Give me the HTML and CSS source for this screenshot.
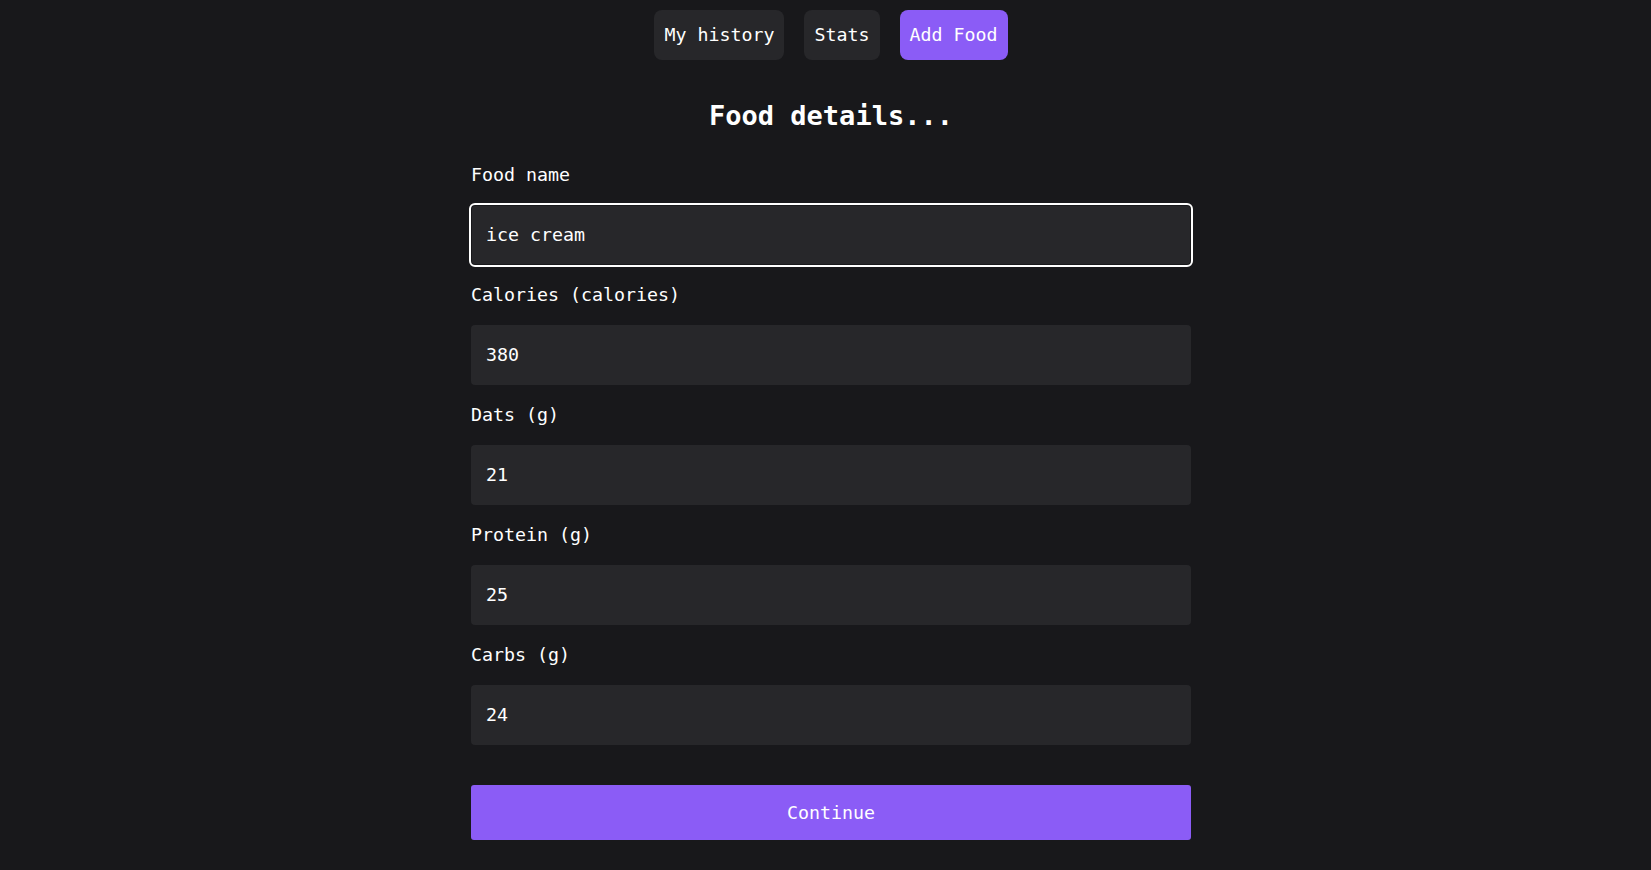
FILE: index.html
```html
<!DOCTYPE html>
<html lang="en">
<head>
<meta charset="utf-8">
<title>Add Food</title>
<link rel="stylesheet" href="styles.css">
</head>
<body>
<div class="page">
  <nav class="nav">
    <button class="nav-btn">My history</button>
    <button class="nav-btn">Stats</button>
    <button class="nav-btn active">Add Food</button>
  </nav>
  <h1 class="title">Food details...</h1>
  <form class="form">
    <div class="field">
      <label class="label">Food name</label>
      <input class="input focused" type="text" value="ice cream">
    </div>
    <div class="field">
      <label class="label">Calories (calories)</label>
      <input class="input" type="text" value="380">
    </div>
    <div class="field">
      <label class="label">Dats (g)</label>
      <input class="input" type="text" value="21">
    </div>
    <div class="field">
      <label class="label">Protein (g)</label>
      <input class="input" type="text" value="25">
    </div>
    <div class="field">
      <label class="label">Carbs (g)</label>
      <input class="input" type="text" value="24">
    </div>
    <button type="button" class="submit">Continue</button>
  </form>
</div>
</body>
</html>
```

FILE: styles.css
```css
html, body {
  margin: 0;
  padding: 0;
  background: #18181b;
  color: #ffffff;
  font-family: "DejaVu Sans Mono", "Liberation Mono", monospace;
}

.page {
  display: flex;
  flex-direction: column;
  align-items: center;
  padding-left: 11px;
}

.nav {
  display: flex;
  gap: 20px;
  padding-top: 10px;
}

.nav-btn {
  box-sizing: border-box;
  height: 50px;
  padding: 0 10px 2px;
  border: none;
  border-radius: 8px;
  background: #27272a;
  color: #ffffff;
  font-family: inherit;
  font-size: 18.3px;
}

.nav-btn.active {
  background: #8b5cf6;
}

.title {
  margin: 39px 0 0;
  font-size: 27px;
  line-height: 34px;
  font-weight: bold;
}

.form {
  width: 720px;
  margin-top: 30px;
  display: flex;
  flex-direction: column;
}

.field {
  display: flex;
  flex-direction: column;
  margin-bottom: 18px;
}

.label {
  font-size: 18.3px;
  line-height: 24px;
  margin-bottom: 18px;
}

.input {
  box-sizing: border-box;
  height: 60px;
  padding: 0 15px 2px;
  border: none;
  border-radius: 4px;
  background: #27272a;
  color: #ffffff;
  font-family: inherit;
  font-size: 18.3px;
  outline: none;
}

.input.focused {
  outline: 2px solid #ffffff;
  outline-offset: 0;
  box-shadow: inset 0 0 0 1px #18181b;
}

.submit {
  margin-top: 22px;
  height: 55px;
  border: none;
  border-radius: 3px;
  background: #8b5cf6;
  color: #ffffff;
  font-family: inherit;
  font-size: 18.3px;
}
```
